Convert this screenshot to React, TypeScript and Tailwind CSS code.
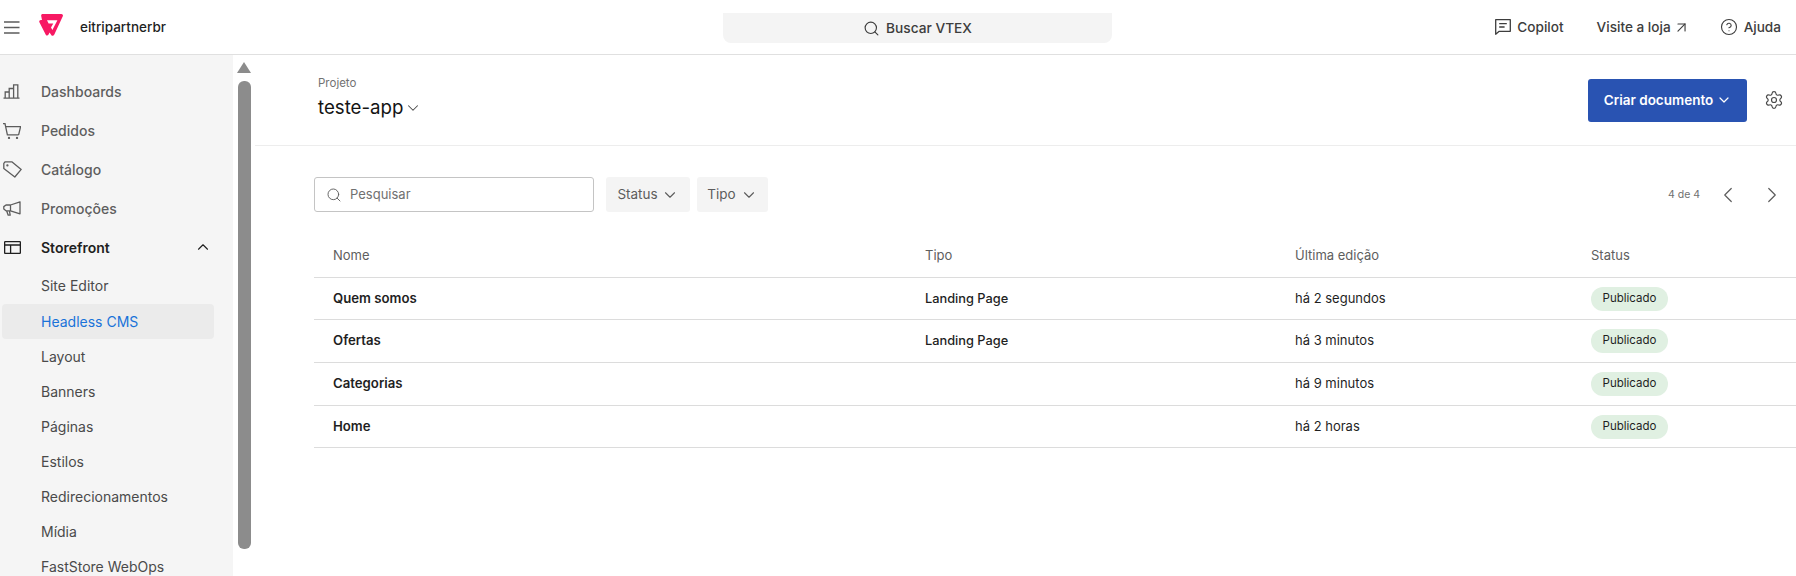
import { ChevronDown, ChevronLeft, ChevronRight, ChevronUp, ArrowUpRight, CircleHelp, Search, Settings } from "lucide-react";

const TOP_ITEMS = [
  { label: "Dashboards", icon: <BarsIcon /> },
  { label: "Pedidos", icon: <CartIcon /> },
  { label: "Catálogo", icon: <TagIcon /> },
  { label: "Promoções", icon: <MegaphoneIcon /> },
];

const SUB_ITEMS = ["Headless CMS", "Layout", "Banners", "Páginas", "Estilos", "Redirecionamentos", "Mídia", "FastStore WebOps"];

const ROWS = [
  { name: "Quem somos", type: "Landing Page", edited: "há 2 segundos", h: "h-[42px]" },
  { name: "Ofertas", type: "Landing Page", edited: "há 3 minutos", h: "h-[43px]" },
  { name: "Categorias", type: "", edited: "há 9 minutos", h: "h-[43px]" },
  { name: "Home", type: "", edited: "há 2 horas", h: "h-[42px]" },
];

function BarsIcon() {
  return (
    <svg width="17" height="15" viewBox="0 0 17 15" fill="none" stroke="#5c5c5c" strokeWidth="1.3">
      <path d="M0.5 14.2h16M2.2 14.2V8h4v6.2M6.2 14.2V4.5h4.4v9.7M10.6 14.2V.8h4.2v13.4" />
    </svg>
  );
}

function CartIcon() {
  return (
    <svg width="18" height="16" viewBox="0 0 18 16" fill="none" stroke="#5c5c5c" strokeWidth="1.3">
      <path d="M0 .7h2L4.4 11.8h11.2M3 3.6h14.6l-2 8.2" />
      <circle cx="6" cy="15" r="0.5" />
      <circle cx="14" cy="15" r="0.5" />
    </svg>
  );
}

function TagIcon() {
  return (
    <svg width="19" height="17" viewBox="0 0 19 17" fill="none" stroke="#5c5c5c" strokeWidth="1.3" strokeLinejoin="round">
      <path d="M.8 2.4 2.2.8h6.6l9.4 7.6-6.4 7.6L.8 7.6z" />
      <circle cx="4.4" cy="4.4" r="0.5" />
    </svg>
  );
}

function MegaphoneIcon() {
  return (
    <svg width="18" height="15" viewBox="0 0 18 15" fill="none" stroke="#5c5c5c" strokeWidth="1.3" strokeLinejoin="round">
      <path d="M17 .8v12L7.5 9.8H3L.8 8V5.6L3 4h4.5zM7.5 4v5.8M3.6 9.8l1.6 4.4h2L6.4 9.8" />
    </svg>
  );
}

function LayoutIcon() {
  return (
    <svg width="17" height="13" viewBox="0 0 17 13" fill="none" stroke="#1f1f1f" strokeWidth="1.3">
      <rect x="0.65" y="0.65" width="15.7" height="11.7" rx="0.6" />
      <path d="M0.65 4h15.7M6.6 4v8.3" />
    </svg>
  );
}

function CopilotIcon() {
  return (
    <svg width="16" height="16" viewBox="0 0 16 16" fill="none" stroke="#3d3d3d" strokeWidth="1.3">
      <path d="M.7 15.2V.7h14.6v11.6H4.2z" strokeLinejoin="round" />
      <path d="M4.2 4.6h7.6M4.2 8h5.4" />
    </svg>
  );
}

function VtexLogo() {
  return (
    <svg width="24" height="22" viewBox="0 0 24 22">
      <path
        d="M3.6 0H22.4C23.6 0 24.3 1.2 23.8 2.3L15.2 20.8C14.6 22 13 22 12.4 21.2L10.6 18.4 9.4 20.8C8.8 21.8 7.6 21.8 6.9 21L.4 8.3C-.1 7.3.5 6 1.8 6H3L2.2 2C2 .9 2.6 0 3.6 0Z"
        fill="#f71963"
      />
      <path d="M8 6.2H18.4L13.4 16 12 13.6 14.3 9.4H9.6Z" fill="#fff" />
    </svg>
  );
}

function Scrollbar() {
  return (
    <div className="flex w-[22px] shrink-0 flex-col items-center">
      <div className="mt-[7px] h-0 w-0 border-x-[7.5px] border-b-[11px] border-x-transparent border-b-[#8c8c8c]" />
      <div className="mt-[8px] h-[468px] w-[13px] rounded-[6px] bg-[#8c8c8c]" />
    </div>
  );
}

function Sidebar() {
  return (
    <div className="flex h-full w-[233px] shrink-0 flex-col overflow-hidden bg-[#f5f5f5] pt-[17px]">
      {TOP_ITEMS.map((item) => (
        <div key={item.label} className="flex h-[39px] shrink-0 items-center">
          <span className="flex w-[41px] shrink-0 pl-[3px]">{item.icon}</span>
          <span className="text-[14px] font-medium text-[#5e5e5e]">{item.label}</span>
        </div>
      ))}
      <div className="flex h-[38px] shrink-0 items-center">
        <span className="flex w-[41px] shrink-0 pl-[4px]">
          <LayoutIcon />
        </span>
        <span className="flex-1 text-[14px] font-semibold text-[#1f1f1f]">Storefront</span>
        <ChevronUp className="mr-[21px] size-[18px] text-[#1f1f1f]" strokeWidth={1.5} />
      </div>
      <div className="flex h-[38px] shrink-0 items-center pl-[41px] text-[14px] text-[#4a4a4a]">Site Editor</div>
      {SUB_ITEMS.map((label) =>
        label === "Headless CMS" ? (
          <div key={label} className="mx-[2px] flex h-[35px] w-[212px] shrink-0 items-center rounded-[4px] bg-[#ebebeb] pl-[39px] text-[14px] text-[#1a73d9]">
            {label}
          </div>
        ) : (
          <div key={label} className="flex h-[35px] shrink-0 items-center pl-[41px] text-[14px] text-[#4a4a4a]">
            {label}
          </div>
        ),
      )}
    </div>
  );
}

function TopBar() {
  return (
    <header className="flex h-[55px] shrink-0 items-start border-b border-[#e0e0e0] bg-white">
      <div className="flex h-[54px] w-[723px] shrink-0 items-center">
        <svg className="ml-[4px]" width="16" height="13" viewBox="0 0 16 13" fill="none" stroke="#5c5c5c" strokeWidth="1.4">
          <path d="M0 1h15.5M0 6.5h15.5M0 12h15.5" />
        </svg>
        <span className="ml-[19px] mt-[-4px]">
          <VtexLogo />
        </span>
        <span className="ml-[17px] text-[13.5px] font-medium text-[#1f1f1f]">eitripartnerbr</span>
      </div>
      <div className="mt-[13px] flex h-[30px] w-[389px] items-center justify-center gap-[6px] rounded-b-[8px] bg-[#f4f4f4] text-[13.7px] font-medium text-[#3d3d3d]">
        <Search className="size-[17px]" strokeWidth={1.6} />
        Buscar VTEX
      </div>
      <div className="flex h-[54px] flex-1 items-center justify-end pr-[15px] text-[13.6px] font-medium text-[#3d3d3d]">
        <CopilotIcon />
        <span className="ml-[6px] mr-[33px]">Copilot</span>
        <span>Visite a loja</span>
        <ArrowUpRight className="ml-[2px] mr-[30px] size-[17px]" strokeWidth={1.6} />
        <CircleHelp className="mr-[6px] size-[18px]" strokeWidth={1.5} />
        <span>Ajuda</span>
      </div>
    </header>
  );
}

function PageHeader() {
  return (
    <div className="flex h-[91px] shrink-0 items-center border-b border-[#ededed] pl-[63px]">
      <div className="flex-1">
        <div className="mt-[-4px] text-[11.5px] leading-[14px] text-[#727272]">Projeto</div>
        <div className="mt-[6px] flex items-center text-[18.7px] leading-[24px] text-[#141414]">
          teste-app
          <ChevronDown className="size-[18px] text-[#4a4a4a]" strokeWidth={1.4} />
        </div>
      </div>
      <div className="flex h-[43px] w-[159px] items-center justify-center gap-[3px] rounded-[3px] bg-[#2953b2] pl-[1px] text-[13.5px] font-semibold text-white">
        Criar documento
        <ChevronDown className="size-[16px]" strokeWidth={1.8} />
      </div>
      <Settings className="ml-[17px] mr-[12px] size-[20px] text-[#4a4a4a]" strokeWidth={1.4} />
    </div>
  );
}

function Filters() {
  return (
    <div className="flex h-[35px] items-center">
      <div className="flex h-[35px] w-[280px] items-center rounded-[3px] border border-[#c4c4c4] pl-[11px] text-[13px] text-[#707070]">
        <Search className="mr-[8px] size-[16px] text-[#5c5c5c]" strokeWidth={1.4} />
        Pesquisar
      </div>
      <div className="ml-[12px] flex h-[35px] w-[84px] items-center justify-center gap-[3px] rounded-[3px] bg-[#f4f4f4] text-[13.5px] text-[#5c5c5c]">
        Status
        <ChevronDown className="size-[18px]" strokeWidth={1.5} />
      </div>
      <div className="ml-[7px] flex h-[35px] w-[71px] items-center justify-center gap-[4px] rounded-[3px] bg-[#f4f4f4] text-[13.5px] text-[#5c5c5c]">
        Tipo
        <ChevronDown className="size-[18px]" strokeWidth={1.5} />
      </div>
      <span className="ml-auto text-[10.5px] text-[#707070]">4 de 4</span>
      <ChevronLeft className="ml-[15px] size-[26px] text-[#5c5c5c]" strokeWidth={1.1} />
      <ChevronRight className="ml-[18px] mr-[11px] size-[26px] text-[#5c5c5c]" strokeWidth={1.1} />
    </div>
  );
}

function DocumentsTable() {
  return (
    <div className="mt-[23px] text-[13px]">
      <div className="flex h-[43px] items-center border-b border-[#dcdcdc] pl-[19px] text-[#5e5e5e]">
        <span className="w-[592px]">Nome</span>
        <span className="w-[370px]">Tipo</span>
        <span className="w-[296px]">Última edição</span>
        <span>Status</span>
      </div>
      {ROWS.map((row) => (
        <div key={row.name} className={`flex items-center border-b border-[#dcdcdc] pl-[19px] text-[#1f1f1f] ${row.h}`}>
          <span className="w-[592px] text-[13.2px] font-semibold">{row.name}</span>
          <span className="w-[370px] text-[12.8px] font-medium">{row.type}</span>
          <span className="w-[296px]">{row.edited}</span>
          <span className="flex h-[24px] w-[77px] items-center justify-center rounded-full bg-[#e0f0e2] text-[11.5px] text-[#1f1f1f]">Publicado</span>
        </div>
      ))}
    </div>
  );
}

export default function App() {
  return (
    <div className="flex h-[576px] w-[1796px] flex-col overflow-hidden bg-white font-['Inter',sans-serif]">
      <TopBar />
      <div className="flex min-h-0 flex-1">
        <Sidebar />
        <Scrollbar />
        <main className="min-w-0 flex-1">
          <PageHeader />
          <div className="pl-[59px] pt-[31px]">
            <Filters />
            <DocumentsTable />
          </div>
        </main>
      </div>
    </div>
  );
}
